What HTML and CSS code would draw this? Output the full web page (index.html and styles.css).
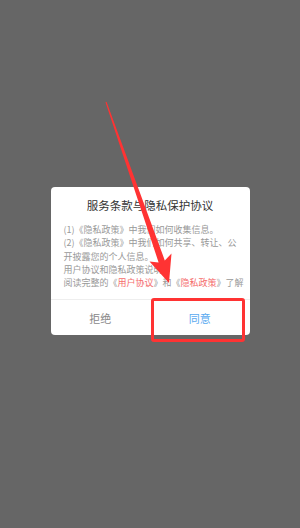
FILE: index.html
```html
<!DOCTYPE html>
<html lang="zh-CN">
<head>
    <meta charset="UTF-8">
    <meta name="viewport" content="width=device-width, initial-scale=1.0">
    <title>服务条款与隐私保护协议</title>
    <link rel="stylesheet" href="styles.css">
</head>
<body>
    <div class="mask">
        <div class="dialog">
            <h3 class="dialog-title">服务条款与隐私保护协议</h3>
            <div class="dialog-body">
                <p>(1)《隐私政策》中我们如何收集信息。</p>
                <p>(2)《隐私政策》中我们如何共享、转让、公开披露您的个人信息。</p>
                <p>用户协议和隐私政策说明：</p>
                <p>阅读完整的《<span class="link">用户协议</span>》和《<span class="link">隐私政策</span>》了解</p>
            </div>
            <div class="dialog-btns">
                <button class="btn btn-refuse">拒绝</button>
                <button class="btn btn-agree">同意</button>
            </div>
        </div>
    </div>

    <!-- 标注 -->
    <div class="mark-box"></div>
    <svg class="mark-arrow" width="300" height="528" viewBox="0 0 300 528">
        <polygon points="106.5,101.8 164.8,260.4 171.5,253.5 169,283 149.5,261.5 158.6,262.4 105.5,102.2" fill="#f33"/>
    </svg>
</body>
</html>
```

FILE: styles.css
```css
html, body {
    margin: 0;
    padding: 0;
    height: 100%;
}
body {
    font-family: "Noto Sans CJK SC", "Noto Sans", sans-serif;
    background-color: #666;
    position: relative;
    overflow: hidden;
}
.mask {
    height: 100%;
    display: flex;
    justify-content: center;
    align-items: center;
    padding-bottom: 6px;
    box-sizing: border-box;
}
.dialog {
    width: 199px;
    background-color: #fff;
    border-radius: 4px;
    overflow: hidden;
}
.dialog-title {
    margin: 0;
    padding-top: 10px;
    font-size: 11.5px;
    line-height: 16px;
    font-weight: normal;
    color: #333;
    text-align: center;
}
.dialog-body {
    margin: 10px 0 10px;
    padding: 0 5px 0 13px;
    height: 66px;
    overflow: hidden;
    font-size: 9px;
    line-height: 13.3px;
    color: #999;
}
.dialog-body p {
    margin: 0;
}
.link {
    color: #f56c6c;
}
.dialog-btns {
    display: flex;
    border-top: 1px solid #eee;
}
.btn {
    flex: 1;
    height: 35px;
    border: none;
    background: none;
    padding: 0;
    font-family: inherit;
    font-size: 11px;
}
.btn-refuse {
    color: #888;
}
.btn-agree {
    color: #5aaaf0;
}
.mark-box {
    position: absolute;
    left: 151px;
    top: 298px;
    width: 94px;
    height: 44px;
    box-sizing: border-box;
    border: 3px solid #f33;
    border-radius: 3px;
}
.mark-arrow {
    position: absolute;
    left: 0;
    top: 0;
}
```
